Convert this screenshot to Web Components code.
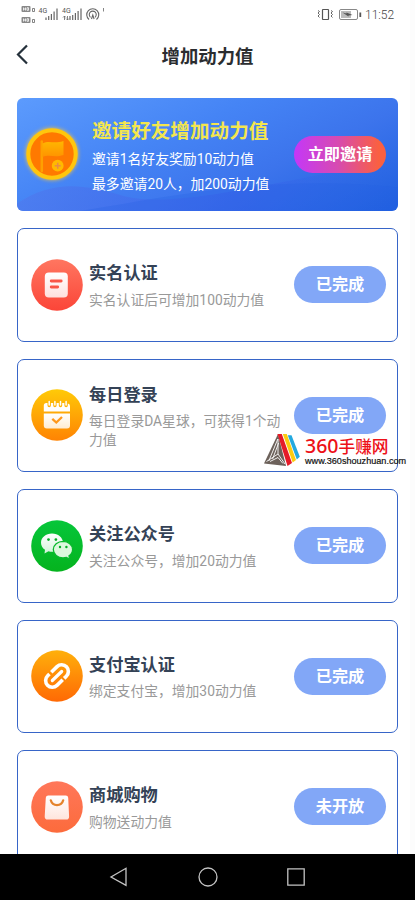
<!DOCTYPE html>
<html lang="zh-CN">
<head>
<meta charset="utf-8">
<title>增加动力值</title>
<style>
html,body{margin:0;height:900px;overflow:hidden;background:#fff}
body{font-family:Roboto,"Noto Sans CJK SC",sans-serif}
</style>
</head>
<body>
<power-page></power-page>
<script>
const define = (name, html, setup) => customElements.define(name, class extends HTMLElement {
  connectedCallback() {
    if (this.shadowRoot) return;
    const t = document.createElement('template');
    t.innerHTML = html;
    this.attachShadow({mode: 'open'}).append(t.content.cloneNode(true));
    if (setup) setup(this, this.shadowRoot);
  }
});

define('status-bar', `
<style>
:host{display:flex;justify-content:space-between;height:30px;box-sizing:border-box;padding:0 20px 0 20px;color:#555}
svg{display:block}
.r{display:flex}
span{font:300 12px/30px Roboto,sans-serif;color:#444;width:30px;white-space:nowrap;margin-left:2px}
</style>
<svg width="90" height="30" viewBox="20 0 90 30" fill="none" stroke="#666">
  <g fill="#888" stroke="none"><rect x="21.5" y="6" width="9" height="6" rx="1"/><rect x="21.5" y="17" width="9" height="6" rx="1"/></g>
  <g stroke="#fff" stroke-width=".8"><path d="M23.5 7.5v3M25.5 7.5v3M23.5 9h2M27 7.7h1.5v2.6H27zM23.5 18.5v3M25.5 18.5v3M23.5 20h2M27 18.7h1.5v2.6H27z"/></g>
  <path d="M32.5 8.5h2v3h-2zM32.5 19.5h2v3h-2z" stroke-width=".8"/>
  <g font-family="Roboto" font-size="7" fill="#555" stroke="none"><text x="38.5" y="13">4G</text><text x="62" y="13">4G</text></g>
  <g stroke-width="1.2"><path d="M46 20v-2.5M48.7 20v-4M51.4 20v-6M54.1 20v-8.5M57 20V8.5"/><path d="M70 20v-4M72.7 20v-5M75.4 20v-7M78.1 20v-9M81 20V8.5"/></g>
  <path d="M64.500 20v-4m-1.500 1.500 1.500-1.500 1.500 1.500M67.500 16v4m-1.500-1.500 1.500 1.500 1.500-1.500" stroke-width=".8"/>
  <path d="M89 19.500a6 6 0 1 1 7.500 0M90.500 17.300a3.500 3.500 0 1 1 4.500 0M91.500 19l1.300-4 1.300 4" stroke-width="1.100"/>
  <path d="M103.500 8v3.500" stroke-width=".8"/>
</svg>
<div class="r">
<svg width="46" height="30" viewBox="317 0 46 30" fill="none" stroke="#555">
  <rect x="322.500" y="9.500" width="6" height="10" rx=".5" stroke-width="1.200"/>
  <path d="M318 10.500l1.500 1-1.500 1.500 1.500 1.500-1.500 1.500 1.500 1.500M331 10.500l1.500 1-1.500 1.500 1.500 1.500-1.500 1.500 1.500 1.500" stroke-width=".9"/>
  <rect x="339.500" y="9.500" width="18" height="10" rx="1.500" stroke="#888"/>
  <rect x="341" y="11" width="10" height="7" fill="#bbb" stroke="none"/>
  <path d="M342.500 12.500l4 1v-1l6 2.500-4 .5v1z" fill="#555" stroke="none"/>
  <path d="M360.300 12.500v4.500" stroke-width="1.800"/>
</svg><span>11:52</span></div>`);

define('title-bar', `
<style>
:host{display:grid;grid-template-columns:50px 1fr 50px;height:50px;align-items:center}
svg{display:block;margin:0 0 0 16px}
h1{margin:3px 0 0;text-align:center;font-weight:700;font-size:18.4px;line-height:30px;color:#2b2d30}
</style>
<svg width="14" height="22" viewBox="0 0 14 22"><path d="M11 1.500 2 10.500l9 9" fill="none" stroke="#25313b" stroke-width="2.200"/></svg>
<h1><slot></slot></h1><i></i>`);

define('pill-button', `
<style>
:host{display:block;flex:none;width:92px;height:37px;border-radius:19px;background:#82a7f7;color:#fff;text-align:center;font-size:16.200px;font-weight:700;line-height:38.500px;white-space:nowrap}
:host([hot]){background:linear-gradient(90deg,#c437f8,#d74bb0 48%,#fa6041 92%)}
</style><slot></slot>`);

const disc = (id, a, b, inner) => `<defs>
<linearGradient id="${id}" x2="0" y2="1"><stop stop-color="${a}"/><stop offset="1" stop-color="${b}"/></linearGradient>
<linearGradient id="w" x2="0" y2="1"><stop stop-color="#fff"/><stop offset="1" stop-color="#fff" stop-opacity=".82"/></linearGradient></defs>
<circle cx="26" cy="26" r="25.800" fill="url(#${id})"/>${inner}`;
const art = {
  id: disc('g', '#ff7660', '#fb4538', `
    <rect x="13.800" y="13.500" width="23" height="25" rx="4" fill="url(#w)"/>
    <path d="M20.200 22h10M20.200 28h6.500" stroke="#fa5647" stroke-width="2.800" stroke-linecap="round"/>`),
  day: disc('g', '#ffca08', '#ff8303', `
    <path d="M12.800 22.500v-6a2.500 2.500 0 0 1 2.500-2.500h1.200v2.500a1.700 1.700 0 0 0 3.400 0V14h2.300v2.500a1.700 1.700 0 0 0 3.400 0V14h2.200v2.500a1.700 1.700 0 0 0 3.400 0V14h2.200v2.500a1.700 1.700 0 0 0 3.400 0V14.500q2.200.3 2.200 2.500v5.500z" fill="#fff"/>
    <path d="M18.200 12.500v3.500M23.900 12.500v3.500M29.500 12.500v3.500M35.100 12.500v3.500" stroke="#fff" stroke-width="1.500" stroke-linecap="round"/>
    <path d="M12.800 24.500h26.200V36.500a3 3 0 0 1-3 3H15.800a3 3 0 0 1-3-3z" fill="url(#w)"/>
    <path d="M21.300 29.800l4 3.700 5.700-5.500" fill="none" stroke="#ff981b" stroke-width="2.300"/>`),
  chat: disc('g', '#06c63a', '#05b31e', `
    <path d="M21 13.500c-6.100 0-11 4.100-11 9.200 0 2.900 1.500 5.400 4 7.100l-.5 3.700 4-2.300c1.100.4 2.300.6 3.500.6 6.100 0 11-4.100 11-9.100s-4.900-9.200-11-9.200z" fill="url(#w)"/>
    <path d="M32 21.300c-5.300 0-9.700 3.600-9.700 8.200s4.400 8.400 9.700 8.400c1.200 0 2.400-.2 3.500-.5l3.200 2-.7-3.500c2.200-1.500 3.600-3.800 3.600-6.400 0-4.600-4.300-8.200-9.600-8.200z" fill="#dcf8dd" stroke="#08b92c" stroke-width="1.300"/>
    <g fill="#05ae25"><circle cx="17.500" cy="19.600" r="1.350"/><circle cx="24.900" cy="19.600" r="1.350"/><circle cx="29" cy="27" r="1.200"/><circle cx="35.400" cy="27" r="1.200"/></g>`),
  link: disc('g', '#ffb00b', '#ff6904', `
    <g transform="rotate(-44 26 26)" fill="none" stroke="#fff" stroke-width="3.600" stroke-linecap="butt">
    <path d="M24.500 19.300h8a6.700 6.700 0 0 1 0 13.400h-3"/><path d="M27.500 32.700h-8a6.700 6.700 0 0 1 0-13.400h2.500"/><path d="M19.500 26h13" stroke-linecap="round" stroke-width="3.200"/></g>`),
  bag: disc('g', '#ff775a', '#fc6b3c', `
    <path d="M17.300 14.500h17.400a2.500 2.500 0 0 1 2.500 2.300l.9 18.600a3 3 0 0 1-3 3.100H16.700a3 3 0 0 1-3-3.100l1.100-18.600a2.500 2.500 0 0 1 2.500-2.300z" fill="url(#w)"/>
    <path d="M19.800 19.300c1.800 6.500 10.600 6.500 12.400 0" fill="none" stroke="#e5832d" stroke-width="2.300" stroke-linecap="round"/>`),
  flag: `<defs><linearGradient id="f" x2="0" y2="1"><stop stop-color="#ffb700"/><stop offset="1" stop-color="#ff9300"/></linearGradient></defs>
    <circle cx="26" cy="26" r="23.700" fill="#ff7900" stroke="#ffc60d" stroke-width="4"/>
    <path d="M15.800 13.500v29.500" stroke="#ffa000" stroke-width="2.500" stroke-linecap="round"/>
    <path d="M16.500 15.500c7-3.500 11 .8 21-2.500v14c-9 3-13.500-1-21 2z" fill="url(#f)"/>
    <circle cx="31.700" cy="37.700" r="5.900" fill="#ffb900"/><path d="M28.700 37.700h6M31.700 34.700v6" stroke="#e88a46" stroke-width="1.500"/>`
};
define('round-icon', `
<style>:host{display:block;flex:none;width:52px;height:52px}svg{display:block;overflow:visible}:host([kind=flag]) svg{filter:drop-shadow(0 0 2px #ffc832)}</style>
<svg width="52" height="52" viewBox="0 0 52 52"></svg>`,
(el, root) => { root.querySelector('svg').innerHTML = art[el.getAttribute('kind')]; });

define('invite-banner', `
<style>
:host{display:flex;align-items:center;position:relative;box-sizing:border-box;height:113.500px;padding:0 12px 0 8.500px;border-radius:6px;overflow:hidden;background:linear-gradient(155deg,#5c9bfd 0%,#4584f5 38%,#3c74ec 65%,#1f5fdf 100%);color:#fff}
.wave{position:absolute;inset:0;width:100%;height:100%}
round-icon,div,pill-button{position:relative}
div{flex:1;margin-left:14.500px;padding-top:5.500px;white-space:nowrap}
h2{margin:0 0 1px;font-size:19.600px;line-height:28px;font-weight:700;color:#f3e64e}
p{margin:0;font-size:13.850px;line-height:24.500px}
</style>
<svg class="wave" viewBox="0 0 381 113" preserveAspectRatio="none">
 <defs><linearGradient id="a"><stop stop-color="#5079ed" stop-opacity=".65"/><stop offset=".6" stop-color="#395fea" stop-opacity=".5"/><stop offset="1" stop-color="#2867e4" stop-opacity="0"/></linearGradient></defs>
 <path d="M0 105C35 82 65 85 105 97S220 94 381 60V113H0z" fill="url(#a)"/>
 <path d="M60 113C145 100 250 75 381 89V113z" fill="#255ee4" opacity=".25"/>
</svg>
<round-icon kind="flag"></round-icon>
<div><h2>邀请好友增加动力值</h2><p>邀请1名好友奖励10动力值</p><p>最多邀请20人，加200动力值</p></div>
<pill-button hot>立即邀请</pill-button>`);

define('task-card', `
<style>
:host{display:flex;align-items:center;box-sizing:border-box;height:113.500px;padding:0 11px 0 13px;border:1.300px solid #3765c8;border-radius:7px;background:#fff}
div{flex:1;margin-left:6px;padding-top:1px;min-width:0}
h3{margin:0 0 5px;font-size:17.200px;line-height:24.500px;font-weight:700;color:#344256}
p{margin:0;width:196px;font-size:13.800px;line-height:18.500px;font-weight:400;color:#999}
</style>
<round-icon></round-icon>
<div><h3><slot name="title"></slot></h3><p><slot></slot></p></div>
<pill-button><slot name="state"></slot></pill-button>`,
(el, root) => {
  const old = root.querySelector('round-icon'), icon = document.createElement('round-icon');
  icon.setAttribute('kind', el.getAttribute('icon'));
  old.replaceWith(icon);
});

define('site-mark', `
<style>
:host{display:flex;position:absolute;left:263px;top:432px;width:150px;height:36px}
svg{display:block;flex:none}
div{margin-left:4px;white-space:nowrap}
b{display:block;height:20px;font:500 19.500px/20px "Noto Sans","Noto Sans CJK SC",sans-serif;color:#ed1118;margin-top:4px}
b span{font-size:16.700px}
small{display:block;font:400 9.100px/10px "Liberation Sans",sans-serif;color:#111;-webkit-text-stroke:.2px #111}
</style>
<svg width="38" height="36" viewBox="263 432 38 36">
 <path d="M278 434 264 463.500l22 2.500z" fill="#6d625b"/>
 <path d="M277.800 439l-9 22M278.600 443l-6 16M266.500 461.500l11.500-7.500 7 10M270 461.500l8-4 5 6M278 439v15" fill="none" stroke="#fff" stroke-width=".9"/>
 <path d="M277.500 434h4.300l10.200 29-4.500 3z" fill="#e51b28"/>
 <path d="M282.800 434h4l9.200 26-3.300 2.600z" fill="#fbcb10"/>
 <path d="M287.800 435.300h3.700l8.300 21.500-3 2.600z" fill="#23a9df"/>
</svg>
<div><b>360<span>手赚网</span></b><small>www.360shouzhuan.com</small></div>`);

define('system-nav', `
<style>:host{display:grid;height:46px;background:#000;grid-template-columns:repeat(3,88.500px);justify-content:center;place-items:center;box-sizing:border-box}svg{display:block}</style>
<svg width="22" height="22" viewBox="0 0 22 22" fill="none" stroke="#c4c4c4" stroke-width="1.300"><path d="M18 2.300v17L3 11z"/></svg>
<svg width="22" height="22" viewBox="0 0 22 22" fill="none" stroke="#c4c4c4" stroke-width="1.300"><circle cx="11" cy="11" r="9"/></svg>
<svg width="22" height="22" viewBox="0 0 22 22" fill="none" stroke="#c4c4c4" stroke-width="1.300"><path d="M2.800 2.800h16.400v16.400H2.800z"/></svg>`);

define('power-page', `
<style>
:host{display:flex;flex-direction:column;position:relative;width:415px;height:900px;overflow:hidden;background:linear-gradient(90deg,#fff 410px,#fcfcfc 410px)}
main{flex:1;min-height:0;overflow:hidden;display:flex;flex-direction:column;gap:17px;padding:17.700px 17px 0;box-sizing:border-box}
main>*{flex:none}
</style>
<status-bar></status-bar>
<title-bar>增加动力值</title-bar>
<main>
<invite-banner></invite-banner>
<task-card icon="id"><span slot="title">实名认证</span>实名认证后可增加100动力值<span slot="state">已完成</span></task-card>
<task-card icon="day"><span slot="title">每日登录</span>每日登录DA星球，可获得1个动力值<span slot="state">已完成</span></task-card>
<task-card icon="chat"><span slot="title">关注公众号</span>关注公众号，增加20动力值<span slot="state">已完成</span></task-card>
<task-card icon="link"><span slot="title">支付宝认证</span>绑定支付宝，增加30动力值<span slot="state">已完成</span></task-card>
<task-card icon="bag"><span slot="title">商城购物</span>购物送动力值<span slot="state">未开放</span></task-card>
</main>
<system-nav></system-nav>
<site-mark></site-mark>`);
</script>
</body>
</html>
